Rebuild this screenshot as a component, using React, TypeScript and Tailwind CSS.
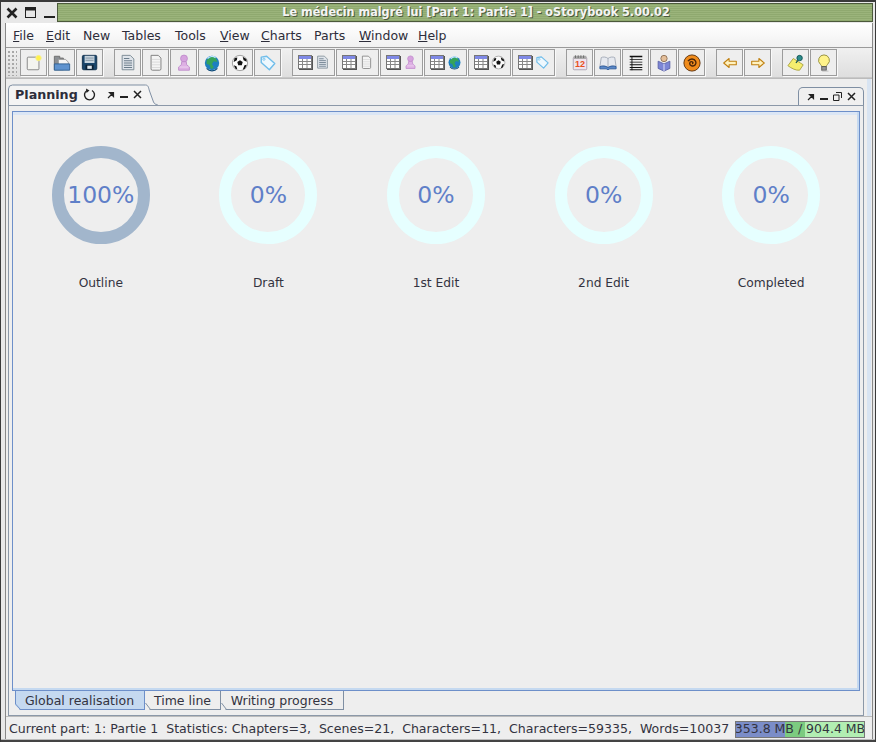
import type { ReactNode } from "react";

const font = "[font-family:'DejaVu_Sans',Verdana,sans-serif]";

function Ico({ children }: { children: ReactNode }) {
  return (
    <svg width="20" height="20" viewBox="0 0 20 20" className="shrink-0">
      {children}
    </svg>
  );
}

function NewDoc() {
  return (
    <Ico>
      <rect x="2.500" y="3.500" width="13" height="14" rx="1" fill="#f4f4f0" stroke="#808080" />
      <circle cx="15" cy="4.500" r="3" fill="#fff04a" stroke="#f6ee90" />
    </Ico>
  );
}
function OpenIcon() {
  return (
    <Ico>
      <path d="M1.500 2.500h6v2h4v13h-10z" fill="#8b8f93" stroke="#6a6a6a" />
      <path d="M6 6h8l3 3v4H6z" fill="#f5f5f5" stroke="#999" />
      <path d="M1.500 18v-7h17v7z" fill="#5f93cf" stroke="#2f5d8f" />
    </Ico>
  );
}
function SaveIcon() {
  return (
    <Ico>
      <rect x="1.500" y="1.500" width="16" height="16" rx="1.500" fill="#19456b" stroke="#0e2c48" />
      <rect x="4" y="2" width="11" height="8" fill="#c7d4de" />
      <path d="M5 4.500h9M5 7h9" stroke="#7c8f9e" />
      <rect x="5" y="12" width="9" height="5.500" fill="#0c2236" />
      <rect x="7" y="13" width="5" height="3.500" fill="#dfe6ec" />
    </Ico>
  );
}
function ChapterIcon() {
  return (
    <Ico>
      <path d="M3.500 1.500h9l4 4v12h-13z" fill="#dfe4ea" stroke="#75858f" />
      <path d="M5.500 5h6M5.500 7.500h9M5.500 10h9M5.500 12.500h9M5.500 15h9" stroke="#5e7080" />
    </Ico>
  );
}
function SceneIcon() {
  return (
    <Ico>
      <path d="M4.500 1.500h8l3 3v12a1.500 1.500 0 0 1-1.500 1.500h-8a1.500 1.500 0 0 1-1.500-1.500z" fill="#f4f4f4" stroke="#777" />
      <path d="M5.500 6h9M5.500 9h9M5.500 12h9M5.500 15h9" stroke="#d8d8d8" />
    </Ico>
  );
}
function PersonIcon() {
  return (
    <Ico>
      <circle cx="10" cy="5" r="3.800" fill="#d6a3de" stroke="#c08ccc" />
      <path d="M7.500 8.500h5l.5 3.500 3 2.500v3.500H4v-3.500l3-2.500z" fill="#deb0e4" stroke="#c08ccc" />
      <path d="M5 14.500h10" stroke="#f0d8f2" />
    </Ico>
  );
}
function GlobeIcon() {
  return (
    <Ico>
      <circle cx="10" cy="10" r="8" fill="#1d7fc0" />
      <path d="M4 7c3-4 7-5 10-3l2 5-4-1-2 3 2 4-3 2-2-5-3-1z" fill="#35a35a" />
      <path d="M5 5a7 7 0 0 1 9-1" stroke="#bfe6ff" strokeWidth="1.500" fill="none" />
      <path d="M4 16a8 8 0 0 0 12 0" stroke="#0d4c7c" strokeWidth="1.400" fill="none" />
    </Ico>
  );
}
function BallIcon() {
  return (
    <Ico>
      <circle cx="10" cy="10" r="8.500" fill="#fbfbfb" stroke="#999" />
      <path d="M10 7l3 2-1 3.500H8L7 9z" fill="#111" />
      <path d="M4 4.500l3-.5-.5 3-3.500 2zM13 3l4 2.500.5 3-3.500-1.500zM3 12.500l3 1 1 3.500-2-.5zM15 12.500l2.500-.5-2 4.500-2.500 1z" fill="#111" />
    </Ico>
  );
}
function TagIcon() {
  return (
    <Ico>
      <path d="M2.500 3.500l6-1 9 8-6 7-9-8z" fill="#eef8fe" stroke="#70bdea" strokeWidth="1.600" strokeLinejoin="round" />
      <circle cx="5.500" cy="5.800" r="1.200" fill="#fff" stroke="#70bdea" />
    </Ico>
  );
}
function TableIcon() {
  return (
    <svg width="15" height="15" viewBox="0 0 15 15" className="shrink-0">
      <rect x="1" y="1" width="14" height="14" fill="#555" />
      <rect x="0.500" y="0.500" width="13" height="13" fill="#fff" stroke="#777" />
      <rect x="1" y="1" width="12" height="3" fill="#7f89e6" />
      <path d="M1 6.500h12M1 9.500h12M4.500 4v9M9 4v9" stroke="#888" />
    </svg>
  );
}
function CalendarIcon() {
  return (
    <Ico>
      <rect x="2.500" y="3.500" width="15" height="14" rx="1" fill="#eee4ee" stroke="#a9a0ae" />
      <rect x="3" y="2" width="14" height="3.500" fill="#aaa" />
      <path d="M5 1.500v3M8 1.500v3M11 1.500v3M14 1.500v3" stroke="#666" />
      <text x="10" y="14.500" textAnchor="middle" fontSize="10" fontWeight="700" fill="#e8501c" fontFamily="Liberation Sans">12</text>
    </Ico>
  );
}
function BookIcon() {
  return (
    <Ico>
      <path d="M10 5C8 3 4 3 2.500 4L1 14c3-1 6-1 9 1 3-2 6-2 9-1L17.500 4C16 3 12 3 10 5z" fill="#e6e9ef" stroke="#a0a8b5" />
      <path d="M10 5v10" stroke="#a0a8b5" />
      <path d="M1 14v2.500h7l2 1 2-1h7V14c-3-1-6-1-9 1-3-2-6-2-9-1z" fill="#5a88c8" stroke="#2e5b9c" />
    </Ico>
  );
}
function ListIcon() {
  return (
    <Ico>
      <path d="M3 2h14v1.500H3zM3 5.500h14v1H3zM3 8.500h14v1H3zM3 11.500h14v1H3zM3 14.500h14v1H3zM3 17h14v1H3z" fill="#111" />
      <path d="M5.500 3v15" stroke="#111" />
    </Ico>
  );
}
function ReaderIcon() {
  return (
    <Ico>
      <circle cx="10" cy="5" r="3.500" fill="#e4bf9a" stroke="#8c6f55" />
      <path d="M3.500 8l6.500 3 6.500-3v8l-6.500 3-6.500-3z" fill="#7c86d6" stroke="#5a62a8" />
      <path d="M10 11v8" stroke="#e8e8f8" />
    </Ico>
  );
}
function SpiralIcon() {
  return (
    <Ico>
      <circle cx="10" cy="10" r="9" fill="#f08c1c" stroke="#5a2e08" />
      <path d="M10 10.500c1.500 0 1.500-2-.5-2-2.500 0-3 3.500 0 4.500 3.500 1 6-2 4.500-5C12.500 5 8 4.500 5.500 8" fill="none" stroke="#4a2508" strokeWidth="1.600" />
    </Ico>
  );
}
function ArrowIcon({ flip }: { flip?: boolean }) {
  return (
    <svg width="20" height="20" viewBox="0 0 20 20" className={flip ? "shrink-0 -scale-x-100" : "shrink-0"}>
      <path d="M3 10l6-5v3h8v4H9v3z" fill="#fff2c0" stroke="#c08010" strokeWidth="1.200" strokeLinejoin="round" />
    </svg>
  );
}
function NoteIcon() {
  return (
    <Ico>
      <path d="M1 13l6-8 11 7-4 6c-4 .5-9-2-13-5z" fill="#f5ee6e" stroke="#a8a040" />
      <circle cx="14" cy="4.500" r="3" fill="#2d8c8c" stroke="#155" />
      <path d="M12 7l-2 3" stroke="#155" strokeWidth="1.400" />
    </Ico>
  );
}
function BulbIcon() {
  return (
    <Ico>
      <path d="M10 1a6 6 0 0 0-4 10.500c1 1 1.500 2 1.500 2.500h5c0-.5.5-1.500 1.500-2.500A6 6 0 0 0 10 1z" fill="#fff38a" stroke="#8f8a3a" />
      <rect x="7.500" y="14" width="5" height="4" fill="#999" stroke="#555" />
      <path d="M8 19h7" stroke="#bbb" />
    </Ico>
  );
}

function ToolBtn({ children, wide }: { children: ReactNode; wide?: boolean }) {
  return (
    <div
      className={`${wide ? "w-[43px] gap-[2px] [&_svg]:w-[15px] [&_svg]:h-[15px]" : "w-[27px] [&_svg]:w-[18px] [&_svg]:h-[18px]"} h-[27px] flex items-center justify-center border border-[#9c9c9c] bg-[#eeeeee] shadow-[1px_1px_0_#fafafa]`}
    >
      {children}
    </div>
  );
}

function Group({ children, className }: { children: ReactNode; className?: string }) {
  return <div className={`flex gap-px ${className ?? ""}`}>{children}</div>;
}

function Toolbar() {
  return (
    <div className="flex h-[30px] items-center bg-gradient-to-b from-[#f0f0f0] to-[#dedede] pl-px border-b border-[#c8c8c8]">
      <div className="w-[10px] h-[26px] bg-[radial-gradient(#a8a8a8_1px,transparent_1px)] bg-[length:4px_4px]" />
      <Group className="ml-[3px]">
        <ToolBtn><NewDoc /></ToolBtn>
        <ToolBtn><OpenIcon /></ToolBtn>
        <ToolBtn><SaveIcon /></ToolBtn>
      </Group>
      <Group className="ml-[11px]">
        <ToolBtn><ChapterIcon /></ToolBtn>
        <ToolBtn><SceneIcon /></ToolBtn>
        <ToolBtn><PersonIcon /></ToolBtn>
        <ToolBtn><GlobeIcon /></ToolBtn>
        <ToolBtn><BallIcon /></ToolBtn>
        <ToolBtn><TagIcon /></ToolBtn>
      </Group>
      <Group className="ml-[11px]">
        <ToolBtn wide><TableIcon /><ChapterIcon /></ToolBtn>
        <ToolBtn wide><TableIcon /><SceneIcon /></ToolBtn>
        <ToolBtn wide><TableIcon /><PersonIcon /></ToolBtn>
        <ToolBtn wide><TableIcon /><GlobeIcon /></ToolBtn>
        <ToolBtn wide><TableIcon /><BallIcon /></ToolBtn>
        <ToolBtn wide><TableIcon /><TagIcon /></ToolBtn>
      </Group>
      <Group className="ml-[11px]">
        <ToolBtn><CalendarIcon /></ToolBtn>
        <ToolBtn><BookIcon /></ToolBtn>
        <ToolBtn><ListIcon /></ToolBtn>
        <ToolBtn><ReaderIcon /></ToolBtn>
        <ToolBtn><SpiralIcon /></ToolBtn>
      </Group>
      <Group className="ml-[11px]">
        <ToolBtn><ArrowIcon /></ToolBtn>
        <ToolBtn><ArrowIcon flip /></ToolBtn>
      </Group>
      <Group className="ml-[11px]">
        <ToolBtn><NoteIcon /></ToolBtn>
        <ToolBtn><BulbIcon /></ToolBtn>
      </Group>
    </div>
  );
}

const menus = [
  { pre: "", u: "F", post: "ile", w: "w-[33px]" },
  { pre: "", u: "E", post: "dit", w: "w-[37px]" },
  { pre: "New", u: "", post: "", w: "w-[39px]" },
  { pre: "Tables", u: "", post: "", w: "w-[53px]" },
  { pre: "Tools", u: "", post: "", w: "w-[45px]" },
  { pre: "", u: "V", post: "iew", w: "w-[41px]" },
  { pre: "", u: "C", post: "harts", w: "w-[53px]" },
  { pre: "Parts", u: "", post: "", w: "w-[45px]" },
  { pre: "", u: "W", post: "indow", w: "w-[59px]" },
  { pre: "", u: "H", post: "elp", w: "w-[40px]" },
];

function MenuBar() {
  return (
    <div className="flex h-[25px] items-center pl-[7px] pt-[2px] bg-gradient-to-b from-[#ffffff] to-[#f1f1f1] border-b border-[#9a9a9a] text-[12.5px] text-[#2d2d3a]">
      {menus.map((m) => (
        <div key={m.pre + m.u + m.post} className={`${m.w} shrink-0 whitespace-nowrap`}>
          {m.pre}
          {m.u && <span className="underline">{m.u}</span>}
          {m.post}
        </div>
      ))}
    </div>
  );
}

function TitleBar() {
  return (
    <div className="flex h-[23px] items-center bg-[#e8e8e8] border-t-2 border-[#3a3a3a]">
      <div className="w-[56px] shrink-0 flex items-center pl-[5px] gap-[7px]">
        <svg width="12" height="12" viewBox="0 0 12 12">
          <path d="M1.500 1.500l9 9M10.500 1.500l-9 9" stroke="#222" strokeWidth="2.600" />
        </svg>
        <svg width="12" height="12" viewBox="0 0 12 12">
          <rect x=".5" y=".5" width="10" height="10" fill="#e8e8e8" stroke="#222" />
          <rect x="1" y="1" width="9" height="2.500" fill="#222" />
        </svg>
        <div className="w-[11px] h-[2px] bg-[#222] mt-[9px]" />
      </div>
      <div className="flex-1 h-[19px] mr-[2px] flex items-center justify-center border border-[#4c5a3c] bg-[#8fa96f] bg-[repeating-linear-gradient(0deg,#8fa96f_0px,#8fa96f_1px,#9bb47b_1px,#9bb47b_2px)] text-[12.5px] font-bold [font-stretch:condensed] text-[#f4f4f4] [text-shadow:1px_1px_0_#4c5a3c] pl-[22px]">
        Le médecin malgré lui [Part 1: Partie 1] - oStorybook 5.00.02
      </div>
    </div>
  );
}

function MiniControls({ restore }: { restore?: boolean }) {
  return (
    <div className="flex items-center gap-[5px]">
      <svg width="8" height="8" viewBox="0 0 8 8">
        <path d="M1 7l4-4M2.500 1.500h4v4z" stroke="#222" strokeWidth="1.200" fill="#222" />
      </svg>
      <div className="w-[8px] h-[2px] bg-[#222] mt-[5px]" />
      {restore && (
        <svg width="9" height="9" viewBox="0 0 9 9">
          <path d="M3 .5h5.500V6M.5 3h5.500v5.500H.5z" stroke="#222" fill="none" />
        </svg>
      )}
      <svg width="9" height="9" viewBox="0 0 9 9">
        <path d="M1 1l7 7M8 1l-7 7" stroke="#222" strokeWidth="1.500" />
      </svg>
    </div>
  );
}

function Gauge({ pct, label }: { pct: number; label: string }) {
  return (
    <div className="flex flex-col items-center">
      <div
        className={`w-[98px] h-[98px] rounded-full border-[12px] flex items-center justify-center pt-px ${pct > 0 ? "border-[#a2b6cc]" : "border-[#e6ffff]"}`}
      >
        <span className="text-[23.5px] text-[#5f7fc8] whitespace-nowrap">{pct}%</span>
      </div>
      <div className="mt-[31px] text-[12.25px] leading-[16px] text-[#333340]">{label}</div>
    </div>
  );
}

const bottomTabs = [
  { label: "Global realisation", w: "w-[130px]", on: true },
  { label: "Time line", w: "w-[76px]", on: false },
  { label: "Writing progress", w: "w-[123px]", on: false },
];

function BottomTab({ label, w, on }: { label: string; w: string; on: boolean }) {
  return (
    <div
      className={`${w} relative h-[19px] flex items-center justify-center border-r border-b pt-[2px] text-[12.5px] text-[#333340] ${on ? "bg-[#c5d9f0] border-[#6d8fc9]" : "border-[#7f8fa3]"}`}
    >
      <svg width="6" height="19" viewBox="0 0 6 19" className="absolute left-0 top-0">
        <path d="M0 14v5h5z" fill="#eeeeee" />
        <path d={on ? "M.5 0v13l5 5.500" : "M.5 12l5 6.500"} stroke={on ? "#6d8fc9" : "#7f8fa3"} fill="none" />
      </svg>
      {label}
    </div>
  );
}

export default function App() {
  return (
    <div className={`w-[876px] h-[742px] flex flex-col overflow-hidden bg-[#e8e8e8] border-x border-[#3a3a3a] ${font}`}>
      <TitleBar />
      <div className="flex-1 flex flex-col ml-[4px] mr-[2px] border-x border-[#888] min-h-0 bg-[#eeeeee]">
        <MenuBar />
        <Toolbar />

        <div className="flex-1 min-h-0 flex flex-col pl-[2px] pr-px border-t border-[#bbbbbb]">
          <div className="flex-1 min-h-0 flex flex-col pt-[5px] pr-[3px] border-r-[4px] border-[#d8e4f2]">
            <div className="flex h-[21px] shrink-0 justify-between">
              <div className="relative flex items-center gap-[6px] w-[150px] pl-[7px] text-[12.7px] font-bold text-[#2d2d3a]">
                <svg width="150" height="21" viewBox="0 0 150 21" className="absolute left-0 top-0">
                  <path d="M.5 21V5a4 4 0 0 1 4-4h133c3 0 3 3 4 6l4 11c1 2 2 2.500 4 2.500" fill="#f4f4f4" stroke="#7f8fa3" />
                </svg>
                <span className="relative">Planning</span>
                <svg width="13" height="13" viewBox="0 0 13 13" className="relative -ml-[1px]">
                  <path d="M4 2.500a5 5 0 1 0 5 0" fill="none" stroke="#222" strokeWidth="1.400" />
                  <path d="M3 .5l3.500 2L3.500 5z" fill="#222" />
                </svg>
                <div className="relative ml-[5px]">
                  <MiniControls />
                </div>
              </div>
              <div className="w-[66px] mt-[3px] rounded-t-[5px] border border-b-0 border-[#7f8fa3] bg-[#f0f0f0] flex items-center justify-center gap-px">
                <MiniControls restore />
              </div>
            </div>

            <div className="flex-1 min-h-0 border border-[#8b98a8] bg-[#eeeeee] px-[3px] pt-[5px] pb-[5px] flex flex-col">
              <div className="flex-1 min-h-0 border border-[#6d8fc9] bg-[#eeeeee] shadow-[inset_-2px_-2px_0_#c5d9f0,inset_0_3px_0_#dbe6f5] px-[4px] pt-[34px]">
                <div className="grid grid-cols-5">
                  <Gauge pct={100} label="Outline" />
                  <Gauge pct={0} label="Draft" />
                  <Gauge pct={0} label="1st Edit" />
                  <Gauge pct={0} label="2nd Edit" />
                  <Gauge pct={0} label="Completed" />
                </div>
              </div>
              <div className="flex h-[19px] pl-[3px] shrink-0">
                {bottomTabs.map((t) => (
                  <BottomTab key={t.label} {...t} />
                ))}
              </div>
            </div>
          </div>
        </div>

        <div className="h-[23px] shrink-0 flex items-center pl-[3px] pr-[7px] text-[12.55px] text-[#333340] border-t border-[#bbbbbb] whitespace-pre">
          <span className="flex-1 pt-[2px]">
            {"Current part: 1: Partie 1  Statistics: Chapters=3,  Scenes=21,  Characters=11,  Characters=59335,  Words=10037"}
          </span>
          <div className="relative w-[130px] h-[17px] mt-[2px] border border-[#777] bg-[#b2eeb2] flex items-center justify-center overflow-hidden text-[12.5px]">
            <div className="absolute inset-y-0 left-0 w-[49px] bg-[#7b8dc8]" />
            <div className="absolute inset-y-0 left-[49px] w-[20px] bg-[#7ccb80]" />
            <span className="relative">353.8 MB / 904.4 MB</span>
          </div>
        </div>
      </div>
      <div className="h-[3px] shrink-0 bg-[#444] border-t border-[#bbb]" />
    </div>
  );
}
